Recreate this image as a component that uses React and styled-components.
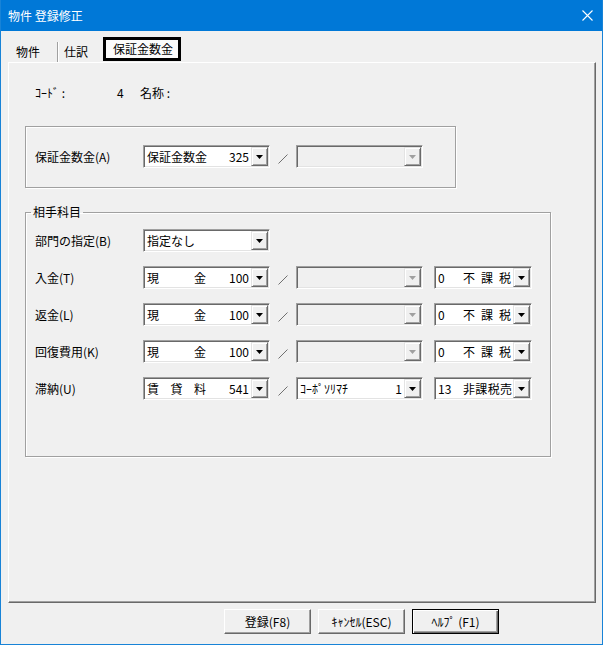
import React from 'react';
import styled, { createGlobalStyle, css } from 'styled-components';

const GlobalStyles = createGlobalStyle`
  body {
    margin: 0;
    background: #f0f0f0;
    font-family: "Noto Sans CJK JP", "Liberation Sans", sans-serif;
    font-size: 12px;
    color: #000;
  }
`;

const Window = styled.div`
  width: 603px;
  height: 645px;
  box-sizing: border-box;
  border: 1px solid #1883d7;
  border-top: none;
  background: #f0f0f0;
  display: flex;
  flex-direction: column;
`;

const TitleBar = styled.div`
  height: 31px;
  flex: none;
  background: #0078d7;
  color: #fff;
  display: flex;
  align-items: center;
  justify-content: space-between;
  padding: 0 9px 0 7px;
  font-size: 12px;
`;

const Body = styled.div`
  flex: 1;
  display: flex;
  flex-direction: column;
  padding: 6px 5px 0 7px;
`;

const TabStrip = styled.div`
  height: 25px;
  display: flex;
  align-items: flex-end;
  padding-left: 2px;
`;

const Tab = styled.div`
  height: 20px;
  line-height: 20px;
  white-space: nowrap;
  padding: 0 ${p => p.$pad}px 0 6px;
  ${p => p.$sep && css`
    border-left: 1px solid #a0a0a0;
    box-shadow: inset 1px 0 0 #fff;
  `}
`;

const ActiveTab = styled.div`
  align-self: flex-start;
  margin-left: 2px;
  height: 24px;
  box-sizing: border-box;
  border: 3px solid #000;
  background: #fbfbfb;
  line-height: 17px;
  white-space: nowrap;
  padding: 0 5px 0 7px;
`;

const Panel = styled.div`
  height: 541px;
  box-sizing: border-box;
  width: 588px;
  border-top: 1px solid #fff;
  border-left: 1px solid #fff;
  border-right: 1px solid #696969;
  border-bottom: 1px solid #696969;
  box-shadow: inset -1px -1px 0 #a0a0a0;
  display: flex;
  flex-direction: column;
  padding-left: 16px;
`;

const InfoRow = styled.div`
  margin-top: 23px;
  height: 14px;
  line-height: 14px;
  padding-left: 10px;
  display: flex;
`;

const InfoLabel = styled.span`
  width: ${p => p.$w}px;
`;

const GroupBox = styled.div`
  margin-top: 26px;
  width: 431px;
  height: 62px;
  box-sizing: border-box;
  border: 1px solid #a0a0a0;
  box-shadow: inset 1px 1px 0 #fff, 1px 1px 0 #fff;
  padding-top: 18px;
`;

const FieldSet = styled.fieldset`
  margin: 17px 0 0 0;
  width: 526px;
  height: 252px;
  box-sizing: border-box;
  border: 1px solid #a0a0a0;
  box-shadow: inset 1px 1px 0 #fff, 1px 1px 0 #fff;
  padding: 10px 0 0 0;
  min-inline-size: 0;
  display: flex;
  flex-direction: column;
  gap: 14px;
`;

const Legend = styled.legend`
  margin-left: 5px;
  padding: 0 2px;
  line-height: 14px;
  font-size: 12px;
`;

const Row = styled.div`
  display: flex;
  align-items: center;
  height: 23px;
  padding-left: 9px;
`;

const Label = styled.div`
  width: 108px;
  flex: none;
`;

const Combo = styled.div`
  width: ${p => p.$w}px;
  height: 23px;
  box-sizing: border-box;
  flex: none;
  display: flex;
  border-top: 1px solid #a0a0a0;
  border-left: 1px solid #a0a0a0;
  border-right: 1px solid #fff;
  border-bottom: 1px solid #fff;
  box-shadow: inset 1px 1px 0 #696969, inset -1px -1px 0 #e3e3e3;
  background: ${p => (p.$disabled ? '#f0f0f0' : '#fff')};
  padding: 1px 1px 1px 2px;
`;

const ComboText = styled.div`
  flex: 1;
  display: flex;
  align-items: center;
  padding-left: 1px;
  padding-right: 2px;
  white-space: nowrap;
  overflow: hidden;
`;

const Code = styled.span`
  width: ${p => p.$w}px;
  flex: none;
`;

const Name = styled.span`
  width: ${p => p.$w}px;
  flex: none;
  text-align: justify;
  text-align-last: justify;
`;

const Num = styled.span`
  margin-left: auto;
`;

const DropButton = styled.div`
  width: 17px;
  flex: none;
  box-sizing: border-box;
  background: #f0f0f0;
  border-top: 1px solid #e3e3e3;
  border-left: 1px solid #e3e3e3;
  border-right: 1px solid #696969;
  border-bottom: 1px solid #696969;
  box-shadow: inset 1px 1px 0 #fff, inset -1px -1px 0 #a0a0a0;
  display: flex;
  align-items: center;
  justify-content: center;
`;

const Slash = styled.div`
  width: 26px;
  flex: none;
  display: flex;
  justify-content: center;
  padding-top: 4px;
`;

const TaxGap = styled.div`
  width: 11px;
  flex: none;
`;

const ButtonBar = styled.div`
  display: flex;
  gap: 7px;
  margin-top: 6px;
  padding-left: 216px;
`;

const Button = styled.div`
  width: 87px;
  height: 25px;
  box-sizing: border-box;
  background: #f0f0f0;
  display: flex;
  align-items: center;
  justify-content: center;
  border-top: 1px solid #fff;
  border-left: 1px solid #fff;
  border-right: 1px solid #696969;
  border-bottom: 1px solid #696969;
  box-shadow: inset -1px -1px 0 #a0a0a0;
  ${p => p.$default && css`
    border: 1px solid #000;
    box-shadow: inset 1px 1px 0 #fff, inset -1px -1px 0 #696969, inset -2px -2px 0 #a0a0a0;
  `}
`;

const Arrow = ({ disabled }) => (
  <svg width="7" height="4" viewBox="0 0 7 4">
    <path d="M0 0h7L3.5 4z" fill={disabled ? '#a0a0a0' : '#000'} />
  </svg>
);

const Box = ({ w, disabled, children }) => (
  <Combo $w={w} $disabled={disabled}>
    <ComboText>{children}</ComboText>
    <DropButton>
      <Arrow disabled={disabled} />
    </DropButton>
  </Combo>
);

const Account = ({ name, num, justify = true }) => (
  <Box w={127}>
    {justify ? <Name $w={59}>{name}</Name> : <span>{name}</span>}
    <Num>{num}</Num>
  </Box>
);

const Tax = ({ code, name }) => (
  <Box w={98}>
    <Code $w={25}>{code}</Code>
    <Name $w={name.length === 4 ? 49 : 48}>{name}</Name>
  </Box>
);

const SlashMark = () => (
  <Slash>
    <svg width="10" height="10" viewBox="0 0 10 10">
      <path d="M0.5 9.5L9.5 0.5" stroke="#707070" strokeWidth="1" />
    </svg>
  </Slash>
);

const rows = [
  { label: '入金(T)', name: '現金', num: '100', tax: ['0', '不課税'] },
  { label: '返金(L)', name: '現金', num: '100', tax: ['0', '不課税'] },
  { label: '回復費用(K)', name: '現金', num: '100', tax: ['0', '不課税'] },
];

const App = () => {
  return (
    <Window>
      <GlobalStyles />
      <TitleBar>
        <span>物件 登録修正</span>
        <svg width="11" height="11" viewBox="0 0 11 11">
          <path d="M0.5 0.5L10.5 10.5M10.5 0.5L0.5 10.5" stroke="#fff" strokeWidth="1.1" />
        </svg>
      </TitleBar>
      <Body>
        <TabStrip>
          <Tab $pad={17}>物件</Tab>
          <Tab $pad={13} $sep>仕訳</Tab>
          <ActiveTab>保証金数金</ActiveTab>
        </TabStrip>
        <Panel>
          <InfoRow>
            <InfoLabel $w={82}>ｺｰﾄﾞ :</InfoLabel>
            <InfoLabel $w={23}>4</InfoLabel>
            <InfoLabel>名称 :</InfoLabel>
          </InfoRow>
          <GroupBox>
            <Row>
              <Label>保証金数金(A)</Label>
              <Account name="保証金数金" num="325" />
              <SlashMark />
              <Box w={127} disabled />
            </Row>
          </GroupBox>
          <FieldSet>
            <Legend>相手科目</Legend>
            <Row>
              <Label>部門の指定(B)</Label>
              <Box w={127}>
                <span>指定なし</span>
              </Box>
            </Row>
            {rows.map(r => (
              <Row key={r.label}>
                <Label>{r.label}</Label>
                <Account name={r.name} num={r.num} />
                <SlashMark />
                <Box w={127} disabled />
                <TaxGap />
                <Tax code={r.tax[0]} name={r.tax[1]} />
              </Row>
            ))}
            <Row>
              <Label>滞納(U)</Label>
              <Account name="賃貸料" num="541" />
              <SlashMark />
              <Account name="ｺｰﾎﾟｿﾘﾏﾁ" num="1" justify={false} />
              <TaxGap />
              <Tax code="13" name="非課税売" />
            </Row>
          </FieldSet>
        </Panel>
        <ButtonBar>
          <Button>登録(F8)</Button>
          <Button>ｷｬﾝｾﾙ(ESC)</Button>
          <Button $default>ﾍﾙﾌﾟ (F1)</Button>
        </ButtonBar>
      </Body>
    </Window>
  );
};

export default App;
